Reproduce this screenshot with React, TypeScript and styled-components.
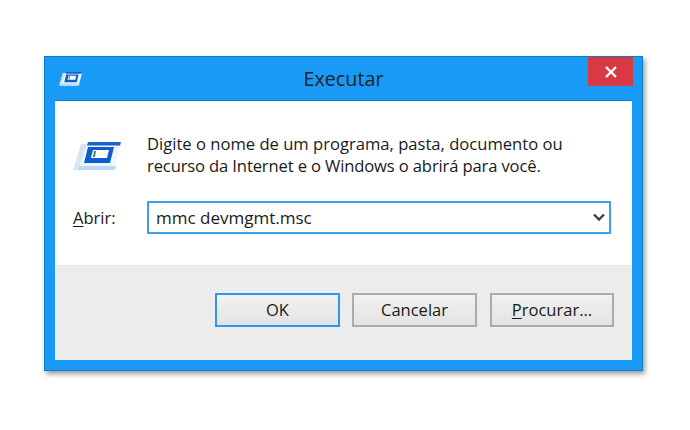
import styled, { createGlobalStyle } from 'styled-components'

const GlobalStyle = createGlobalStyle`
  html, body {
    margin: 0;
    background: #ffffff;
  }
  * {
    box-sizing: border-box;
  }
`

const Page = styled.div`
  width: 690px;
  height: 430px;
  padding: 56px 0 0 44px;
  overflow: hidden;
  font-family: "Open Sans", "Noto Sans", sans-serif;
  color: #1a1a1a;
`

const Dialog = styled.div`
  width: 599px;
  height: 315px;
  display: flex;
  flex-direction: column;
  background: #1a9af7;
  border: 1px solid #0f7cc8;
  box-shadow: 2px 3px 5px rgba(0, 0, 0, 0.4);
  padding: 0 10px 10px;
`

const TitleBar = styled.div`
  height: 43px;
  flex-shrink: 0;
  display: grid;
  grid-template-columns: 1fr auto 1fr;
  align-items: start;
`

const TitleIcon = styled.svg`
  width: 23px;
  height: 14px;
  margin: 15px 0 0 4px;
`

const Title = styled.div`
  font-size: 19.8px;
  line-height: 26px;
  margin-top: 9px;
  color: #20242a;
`

const CloseButton = styled.div`
  justify-self: end;
  width: 45px;
  height: 29px;
  margin-right: -1px;
  background: #d73a42;
  display: flex;
  align-items: center;
  justify-content: center;
`

const Body = styled.div`
  flex: 1;
  display: flex;
  flex-direction: column;
  border-top: 1px solid #0f7cc8;
  box-shadow: inset 0 1px 0 #c4d4e0;
`

const Content = styled.div`
  height: 164px;
  background: #ffffff;
  padding: 32px 21px 0 18px;
`

const MessageRow = styled.div`
  display: flex;
  align-items: flex-start;
`

const RunIcon = styled.svg`
  width: 48px;
  height: 29px;
  margin-top: 9px;
  flex-shrink: 0;
`

const Message = styled.div`
  margin-left: 26px;
  font-size: 16.6px;
  line-height: 22px;
  white-space: nowrap;
`

const MessageLine = styled.div<{ $tight?: boolean }>`
  letter-spacing: ${p => (p.$tight ? '-0.14px' : '0')};
`

const OpenRow = styled.div`
  display: flex;
  align-items: center;
  margin-top: 24px;
`

const OpenLabel = styled.label`
  width: 74px;
  font-size: 16.5px;
`

const Key = styled.span`
  text-decoration: underline;
  text-underline-offset: 2px;
`

const Combo = styled.div`
  width: 464px;
  height: 33px;
  border: 2px solid #3d9fe8;
  display: flex;
  align-items: center;
  justify-content: space-between;
  padding: 0 4px 0 7px;
  font-size: 17px;
`

const Footer = styled.div`
  flex: 1;
  background: #ececec;
  display: flex;
  justify-content: flex-end;
  gap: 12px;
  padding: 28px 18px 0 0;
`

const Button = styled.div<{ $active?: boolean }>`
  width: 125px;
  height: 34px;
  border: 2px solid ${p => (p.$active ? '#2b98ee' : '#ababab')};
  background: linear-gradient(#f1f1f1, #e3e3e3);
  display: flex;
  align-items: center;
  justify-content: center;
  padding-bottom: 2px;
  font-size: 16.5px;

  &:last-child {
    width: 124px;
    margin-left: 1px;
  }
`

function RunGlyph() {
  return (
    <>
      <path d="M8 2h40l-8 26H0z" fill="#d5e5f5" />
      <path d="M14 2h34l-7 26H5z" fill="#eff6fd" />
      <path d="M6 24h37l-1 4H5z" fill="#bcd9f2" />
      <path d="M15 0h33l-1 3.500H14z" fill="#1a62c4" />
      <path d="M15 5h26l-4 16H11z" fill="#0b5ed0" />
      <path d="M20 8h16l-2 8H18z" fill="#ffffff" />
      <path d="M21 9h2l-1 6h-2z" fill="#5a6c80" />
    </>
  )
}

export default function App() {
  return (
    <Page>
      <GlobalStyle />
      <Dialog>
        <TitleBar>
          <TitleIcon viewBox="0 0 48 29" preserveAspectRatio="none">
            <RunGlyph />
          </TitleIcon>
          <Title>Executar</Title>
          <CloseButton>
            <svg width="12" height="12" viewBox="0 0 12 12">
              <path d="M1 1l10 10M11 1L1 11" stroke="#fff" strokeWidth="2.4" />
            </svg>
          </CloseButton>
        </TitleBar>
        <Body>
          <Content>
            <MessageRow>
              <RunIcon viewBox="0 0 48 29" preserveAspectRatio="none">
                <RunGlyph />
              </RunIcon>
              <Message>
                <MessageLine>Digite o nome de um programa, pasta, documento ou</MessageLine>
                <MessageLine $tight>recurso da Internet e o Windows o abrirá para você.</MessageLine>
              </Message>
            </MessageRow>
            <OpenRow>
              <OpenLabel>
                <Key>A</Key>brir:
              </OpenLabel>
              <Combo>
                mmc devmgmt.msc
                <svg width="12" height="9" viewBox="0 0 12 9">
                  <path d="M1 1.5l5 5 5-5" fill="none" stroke="#3c4248" strokeWidth="2.4" />
                </svg>
              </Combo>
            </OpenRow>
          </Content>
          <Footer>
            <Button $active>OK</Button>
            <Button>Cancelar</Button>
            <Button>
              <span>
                <Key>P</Key>rocurar...
              </span>
            </Button>
          </Footer>
        </Body>
      </Dialog>
    </Page>
  )
}
